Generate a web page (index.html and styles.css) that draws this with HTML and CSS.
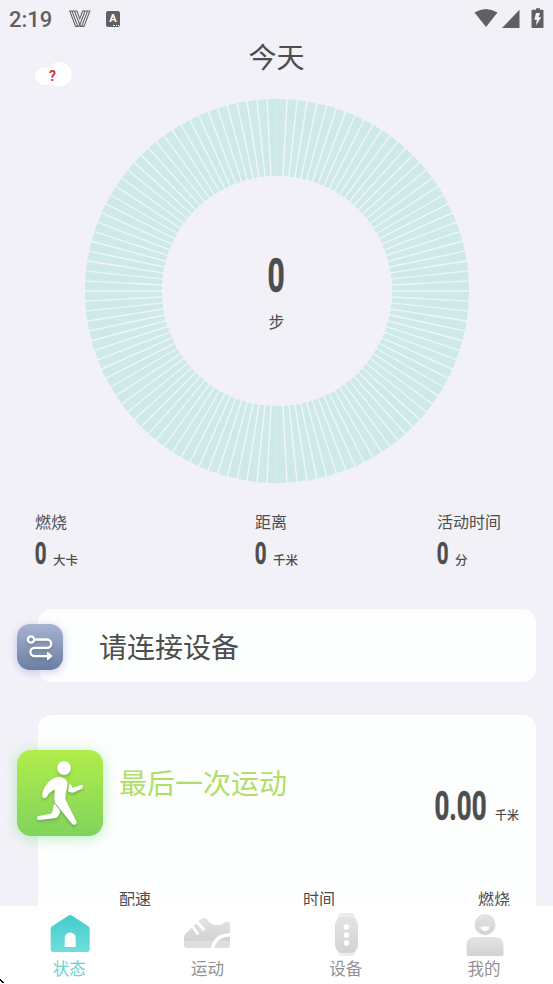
FILE: index.html
```html
<!DOCTYPE html>
<html lang="zh-CN">
<head>
<meta charset="utf-8">
<title>今天</title>
<link rel="stylesheet" href="styles.css">
</head>
<body>
<div class="app">
  <header class="status">
    <span class="clock">2:19</span>
    <svg class="brand" width="22" height="18" viewBox="0 0 22 18" fill="none" stroke="#666568" stroke-width="1.1"><path d="M.8 1H8l2.8 7.6L13.600 1h7.200L15 16.400h-3.400L10.800 14l-.8 2.400H6.600zM3 1l5.700 15.400M5.500 1l5.300 14M18.500 1l-5.800 15.400M16 1l-5.200 14"/></svg>
    <span class="badge">A<i></i></span>
    <svg class="signals" width="70" height="22" viewBox="0 0 70 22" fill="#606063"><path d="M.5 4.500Q12 -2.500 23.500 4.500L12 19z"/><path d="M45.500 1.800V20H28z"/><path d="M62 .2h4v1.600h2.500q1 0 1 1V19q0 1-1 1h-10q-1 0-1-1V2.800q0-1 1-1H62z"/><path fill="#f3f1f8" d="M62 5h4l-1.300 4.200h2.500L62 17.500l.8-5.700h-2.500z"/></svg>
  </header>

  <div class="heading">
    <svg class="cloud" width="37" height="24" viewBox="0 0 37 24"><g fill="#fff"><circle cx="9" cy="14" r="8.800"/><circle cx="24.500" cy="12" r="12"/><path d="M8 8h18v15H10q-5 0-8-5z"/><path d="M36.500 12Q36 23 26 23H12z"/></g><text x="17.500" y="19" text-anchor="middle" class="question">?</text></svg>
    <h1>今天</h1>
  </div>

  <section class="dial">
    <svg class="ring" width="386" height="386" viewBox="-193 -193 386 386">
      <circle r="153.600" fill="none" stroke="#ceeae8" stroke-width="77"/>
      <g id="spokes" stroke="#f1f4f8" stroke-width="1.400"></g>
    </svg>
    <div class="steps">
      <svg width="16" height="36" viewBox="0 0 16 36"><text class="num big" x="-.6" y="35.200" textLength="17.200" lengthAdjust="spacingAndGlyphs">0</text></svg>
      <span>步</span>
    </div>
  </section>

  <section class="stats">
    <div class="stat">
      <h2>燃烧</h2>
      <p><svg width="11" height="24" viewBox="0 0 11 24"><text class="num small" x="-.3" y="23" textLength="11.800" lengthAdjust="spacingAndGlyphs">0</text></svg><span>大卡</span></p>
    </div>
    <div class="stat">
      <h2>距离</h2>
      <p><svg width="11" height="24" viewBox="0 0 11 24"><text class="num small" x="-.3" y="23" textLength="11.800" lengthAdjust="spacingAndGlyphs">0</text></svg><span>千米</span></p>
    </div>
    <div class="stat">
      <h2>活动时间</h2>
      <p><svg width="11" height="24" viewBox="0 0 11 24"><text class="num small" x="-.3" y="23" textLength="11.800" lengthAdjust="spacingAndGlyphs">0</text></svg><span>分</span></p>
    </div>
  </section>

  <section class="card connect">
    <div class="tile link">
      <svg width="46" height="46" viewBox="0 0 46 46" fill="none" stroke="#fff" stroke-width="2.300"><circle cx="14" cy="15.500" r="3.200"/><path d="M17.500 15.500H30a4.200 4.200 0 0 1 0 8.400H17.500a4.100 4.100 0 0 0 0 8.200H31"/><path fill="#fff" stroke-width="1" stroke-linejoin="round" d="M30.500 28.300l4.700 3.800-4.700 3.800z"/></svg>
    </div>
    <span class="connect-text">请连接设备</span>
  </section>

  <section class="card workout">
    <div class="tile run">
      <svg width="86" height="86" viewBox="0 0 86 86" fill="#fff"><circle cx="47" cy="18" r="6.900"/><path d="M39 27.500C44 26 49.500 28.500 50.500 33C51 37 48 42 48.500 49.500L59.500 71.500C60.500 74 57 76 55 73.800L38.500 53.500C36.500 50.500 37.500 45 38 39.500C35 41 31.500 43 30 46.500C29 49 25 48.800 25.200 45.500C25.500 38 32 29.500 39 27.500z"/><path d="M37.300 53.500L43 60.500C43 63 41.500 67 39 68L22.500 70C19.700 70 19 66.500 22 66L34.500 63.500C36 60 36 56.500 37.300 53.500z"/><path d="M53 33.500L56 38L63 35.200C66 34.200 67 37.500 64.500 38.800L56.500 42.500C54.500 43.200 52 41.500 51 41C52 38.500 51.500 35.500 53 33.500z"/></svg>
    </div>
    <h3>最后一次运动</h3>
    <p class="distance"><svg width="51" height="30" viewBox="0 0 51 30"><text class="num mid" x="-.5" y="29.500" textLength="52" lengthAdjust="spacingAndGlyphs">0.00</text></svg><span>千米</span></p>
    <div class="details"><span>配速</span><span>时间</span><span>燃烧</span></div>
  </section>

  <nav class="tabs">
    <svg class="defs" width="0" height="0"><defs>
      <linearGradient id="teal" x2="0" y2="1"><stop stop-color="#42cccd"/><stop offset="1" stop-color="#70ded8"/></linearGradient>
      <linearGradient id="gray" x2="0" y2="1"><stop stop-color="#e4e4e4"/><stop offset="1" stop-color="#d2d2d2"/></linearGradient>
    </defs></svg>
    <a class="tab active"><svg width="48" height="44" viewBox="-1.200 0 48 44"><path fill="url(#teal)" d="M22 2.700Q24 1.200 26 2.700L42.500 13.500Q43.500 14.200 43.500 16V36.500Q43.500 39 41 39H7Q4.500 39 4.500 36.500V16Q4.500 14.200 5.500 13.500z"/><path fill="#fff" d="M18.500 34V25a5.500 5.500 0 0 1 11 0v9z"/></svg><span>状态</span></a>
    <a class="tab"><svg width="48" height="44" viewBox="0 0 48 44"><path fill="url(#gray)" d="M1 28V25Q1 22 3 20L17.500 6.500Q21.500 2.500 25 7.500Q27.500 12 34 12Q38.500 12 41.500 9.500Q47 7 47 12V28z"/><path fill="#dedede" d="M1 28h46v4q0 3-3 3H4q-3 0-3-3z"/><path fill="none" stroke="#fff" stroke-width="3.500" d="M29.500 36Q31.500 22.500 47.500 21.800"/><path stroke="#fff" stroke-width="2.800" stroke-linecap="round" d="M10.500 14.500l4 6M15 10l5.500 6.500"/></svg><span>运动</span></a>
    <a class="tab"><svg width="48" height="44" viewBox="-1 0 48 44"><path fill="#ececec" d="M18 0h11q2 0 3 3l2 7v24l-2 6q-1 3-3 3H18q-2 0-3-3l-2-6V10l2-7q1-3 3-3z"/><path fill="url(#gray)" d="M20 4h7Q33 4 35 11V33Q33 40 27 40H20Q14 40 12 33V11Q14 4 20 4z"/><g fill="#fff"><circle cx="23.500" cy="14" r="2.800"/><circle cx="23.500" cy="22" r="2.800"/><circle cx="23.500" cy="30" r="2.800"/></g></svg><span>设备</span></a>
    <a class="tab"><svg width="48" height="44" viewBox="-1 0 48 44"><circle cx="24" cy="11.500" r="10.500" fill="url(#gray)"/><path fill="#fff" d="M19.500 13.500h9a4.500 4.500 0 0 1-9 0z"/><path fill="url(#gray)" d="M14 24h20q8.500 0 8.500 8.500V41q0 2-2 2h-33q-2 0-2-2v-8.500Q5.500 24 14 24z"/></svg><span>我的</span></a>
    <svg class="cursor" width="5" height="5" viewBox="0 0 5 5"><path d="M0 0h1v1h1v1h1v1h1v1H2V3H1V2H0z"/></svg>
  </nav>
</div>
<script src="ring.js"></script>
</body>
</html>
```
FILE: styles.css
```css
* { box-sizing: border-box; margin: 0; padding: 0; }
body {
  width: 553px; height: 984px; overflow: hidden;
  background: #f3f1f8; color: #4c4d4d;
  font-family: "Noto Sans CJK SC", sans-serif;
}
svg { display: block; flex: none; overflow: visible; }
h1, h2, h3 { font-weight: 400; }
.app { height: 984px; display: flex; flex-direction: column; overflow: hidden; }
.app > * { flex: none; }

.status { height: 37px; display: flex; align-items: center; padding: 0 9px; color: #606063; }
.clock { width: 60px; font: 500 22px/37px Roboto, sans-serif; letter-spacing: 0; padding-top: 2px; }
.brand { margin-top: 1px; }
.badge {
  position: relative; width: 14px; height: 16px; margin-left: 15px; border-radius: 2px;
  background: #606063; color: #fff; font: 700 11px/15px Roboto, sans-serif; text-align: center;
}
.badge i { position: absolute; right: 1px; bottom: 1px; width: 6px; border-bottom: 1px dotted #fff; }
.signals { margin-left: auto; margin-right: 0; }

.heading { height: 61px; position: relative; text-align: center; }
.heading h1 { font-size: 28px; line-height: 38px; }
.cloud { position: absolute; left: 35px; top: 25px; }
.question { font: 700 14px Roboto, sans-serif; fill: #d9304f; }

.dial { height: 386px; display: grid; justify-content: center; align-items: center; }
.dial > * { grid-area: 1 / 1; }
.ring { margin-top: -1px; }
.steps { display: flex; flex-direction: column; align-items: center; justify-self: center; height: 84px; margin-top: 16px; }
.steps span { font-size: 16px; line-height: 24px; margin-top: 16px; }
.num { font-family: Roboto, sans-serif; font-weight: 700; fill: #4c4d4d; stroke: #4c4d4d; stroke-width: .6px; }
.big { font-size: 48px; }
.small { font-size: 31px; stroke-width: .4px; }
.mid { font-size: 40px; }

.stats { display: grid; grid-template-columns: 220px 182px auto; padding-left: 35px; margin-top: 25px; height: 100px; }
.stat h2 { font-size: 16px; line-height: 24px; }
.stat p { display: flex; align-items: flex-end; gap: 7px; margin-top: 8px; }
.stat p span { font-size: 12.500px; font-weight: 500; line-height: 18px; margin-bottom: -4px; }

.card { margin-left: 38px; width: 498px; background: #fdfefe; border-radius: 14px; }
.tile { display: flex; flex: none; }
.tile svg { filter: drop-shadow(0 2px 1.500px rgba(50, 70, 60, .3)); }
.connect { height: 73px; display: flex; align-items: center; margin-bottom: 33px; }
.link {
  width: 46px; height: 46px; margin-left: -21px; margin-top: 3px; border-radius: 13px;
  background: linear-gradient(#a8b2d3, #6b7fa2); box-shadow: 0 2px 9px rgba(130, 130, 220, .42);
}
.connect-text { margin-left: 36px; font-size: 28px; line-height: 40px; }
.workout {
  height: 240px; display: grid; grid-template-columns: 65px 1fr auto; grid-template-rows: 170px 30px;
  column-gap: 16px; padding-right: 17px; margin-bottom: -49px;
}
.run {
  width: 86px; height: 86px; margin-left: -21px; margin-top: 35px; border-radius: 14px;
  background: linear-gradient(#b1ed4a, #80d45c); box-shadow: 0 2px 14px rgba(80, 220, 90, .4);
}
.workout h3 { color: #b0df67; font-size: 28px; line-height: 40px; margin-top: 47px; }
.distance { display: flex; align-items: flex-end; gap: 9px; height: 30px; margin-top: 75px; }
.distance span { font-size: 12px; font-weight: 500; line-height: 18px; margin-bottom: -4px; }
.details { grid-column: 2 / 4; display: grid; grid-template-columns: 184px 175px auto; font-size: 16px; line-height: 24px; padding-top: 1px; }

.tabs { position: relative; height: 78px; background: #fff; display: flex; padding-top: 7px; }
.defs { position: absolute; }
.tab { flex: 1; display: flex; flex-direction: column; align-items: center; color: #929292; }
.tab span { font-size: 16.500px; line-height: 24px; margin-top: -1px; }
.active { color: #66d4d5; }
.cursor { position: absolute; left: 0; bottom: 0; }
```
FILE: ring.js
```javascript
const spokes = document.getElementById("spokes");
for (let i = 0; i < 120; i++) {
  const line = document.createElementNS("http://www.w3.org/2000/svg", "line");
  line.setAttribute("y1", -193);
  line.setAttribute("y2", -114);
  line.setAttribute("transform", `rotate(${i * 3})`);
  if (i === 0 || i === 60) line.setAttribute("stroke", "#d8eaf1");
  spokes.appendChild(line);
}
```
